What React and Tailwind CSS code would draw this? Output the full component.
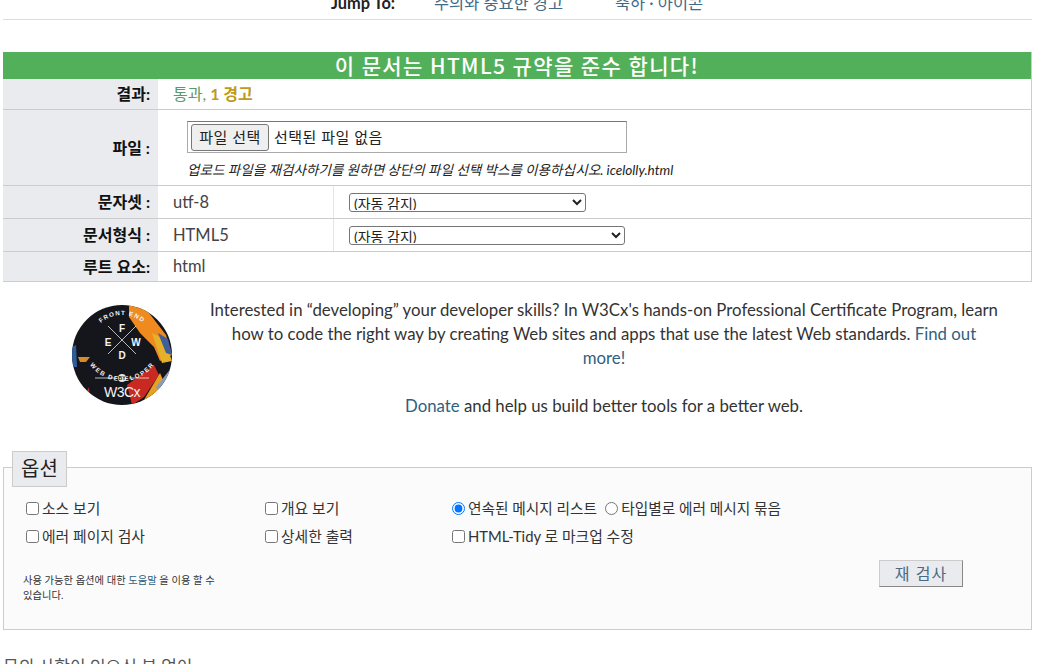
const sans = "font-['Lato','Noto_Sans_CJK_KR',sans-serif]";

function Logo() {
  return (
    <svg width="100" height="100" viewBox="0 0 100 100" className="shrink-0">
      <defs>
        <clipPath id="c"><circle cx="50" cy="50" r="50" /></clipPath>
        <path id="top" d="M18 42 A32 32 0 0 1 82 42" />
        <path id="bot" d="M15 36 A35 35 0 0 0 85 36" />
      </defs>
      <g clipPath="url(#c)">
        <rect width="100" height="100" fill="#14161c" />
        <path d="M57 0 L74 4 L94 30 L100 50 L88 56 L82 42 L68 28 L57 12Z" fill="#ee8a1e" />
        <path d="M80 28 L92 34 L100 56 L90 58Z" fill="#e5b02a" />
        <path d="M86 28 L96 34 L100 50 L94 48Z" fill="#3f5f96" />
        <path d="M55 80 L82 60 L87 70 L72 92 L60 100Z" fill="#c82a22" />
        <path d="M69 100 L88 68 L91 75 L78 100Z" fill="#e8a020" />
        <path d="M84 82 L100 62 L100 66 L86 86Z" fill="#8a9ab8" />
        <path d="M0 42 L4 40 L5 62 L0 62Z" fill="#2f5d9a" />
        <path d="M6 52 L18 52 L14 57 L8 57Z" fill="#d8892a" />
        <path d="M13 90 L17 82 L18 96Z" fill="#b5342a" />
        <g stroke="#e6e6e6" strokeWidth="0.8" fill="none">
          <line x1="36" y1="21" x2="64" y2="49" />
          <line x1="64" y1="21" x2="36" y2="49" />
          <line x1="23" y1="73" x2="43" y2="73" />
          <line x1="57" y1="73" x2="77" y2="73" />
        </g>
        <circle cx="50" cy="73" r="4" fill="#e6e6e6" />
        <g fill="#f4f4f4" fontFamily="Liberation Sans, sans-serif" fontWeight="700" textAnchor="middle">
          <text x="50" y="27" fontSize="10">F</text>
          <text x="36" y="41" fontSize="10">E</text>
          <text x="64" y="41" fontSize="10">W</text>
          <text x="50" y="54" fontSize="10">D</text>
          <text fontSize="6.2" letterSpacing="1.1"><textPath href="#top" startOffset="50%">FRONT END</textPath></text>
          <text fontSize="6.2" letterSpacing="0.9" dominantBaseline="hanging"><textPath href="#bot" startOffset="50%">WEB DEVELOPER</textPath></text>
          <text x="50" y="75" fontSize="5" fill="#14161c">BY</text>
          <text x="50" y="92" fontSize="14" fontWeight="400" letterSpacing="-0.5">W3Cx</text>
        </g>
      </g>
    </svg>
  );
}

function Row({ label, height, children }) {
  return (
    <div className="flex border-b border-[#cccccc]">
      <div className={`w-[155px] shrink-0 bg-[#e9ebef] flex items-center justify-end pr-[8px] font-bold text-[16px] text-[#111] ${height}`}>{label}</div>
      {children}
    </div>
  );
}

function Check({ children }) {
  return (
    <label className="flex items-center text-[14.8px] text-[#333] leading-[20px]">
      <input type="checkbox" className="w-[13px] h-[13px] m-0 mr-[3px] ml-[3px]" />
      {children}
    </label>
  );
}

export default function App() {
  return (
    <div className={`h-[664px] w-[1040px] overflow-hidden bg-white ${sans} text-[#444]`}>
      <div className="ml-[3px] w-[1029px] h-[20px] border-b border-[#dddddd] flex items-end pb-[4px] pl-[328px] text-[16.4px] leading-[24px] overflow-hidden">
        <span className="font-bold text-[#222] w-[103px] shrink-0">Jump To:</span>
        <span className="text-[#3f6a88] w-[181px] shrink-0">주의와 중요한 경고</span>
        <span className="text-[#3f6a88] shrink-0">축하 · 아이콘</span>
      </div>

      <div className="ml-[3px] mr-[8px] mt-[32px] border-r border-[#cccccc]">
        <div className="h-[27px] bg-[#52b05a] text-white text-[21px] leading-[27px] text-center font-['Noto_Sans_CJK_KR',sans-serif] font-medium tracking-[1.4px]">
          이 문서는 HTML5 규약을 준수 합니다!
        </div>
        <Row label="결과:" height="h-[30px]">
          <div className="flex items-center pl-[15px] text-[16px] text-[#5a9a6a]">
            통과,&nbsp;<b className="text-[#c09a1c]">1 경고</b>
          </div>
        </Row>
        <Row label="파일 :" height="h-[75px]">
          <div className="pl-[29px] pt-[11px]">
            <div className="w-[440px] h-[32px] border border-[#aaaaaa] border-t-[#777777] flex items-center pl-[3px] text-[15px] text-[#222]">
              <button className="h-[27px] w-[78px] shrink-0 border border-[#777777] rounded-[3px] bg-[#efefef] text-[15px] tracking-[0.5px] mr-[5px]">파일 선택</button>
              <span className="tracking-[0.5px]">선택된 파일 없음</span>
            </div>
            <p className="italic text-[13.6px] leading-[18px] mt-[8px] text-[#222]">업로드 파일을 재검사하기를 원하면 상단의 파일 선택 박스를 이용하십시오. icelolly.html</p>
          </div>
        </Row>
        <Row label="문자셋 :" height="h-[32px]">
          <div className="w-[176px] border-r border-[#e5e5e5] flex items-center pl-[15px] text-[16.5px]">utf-8</div>
          <div className="flex items-center pl-[15px]">
            <select className="w-[237px] h-[19px] pb-[1px] border border-[#767676] rounded-[3px] text-[14px] text-[#222] bg-white">
              <option>(자동 감지)</option>
            </select>
          </div>
        </Row>
        <Row label="문서형식 :" height="h-[32px]">
          <div className="w-[176px] border-r border-[#e5e5e5] flex items-center pl-[15px] text-[16.5px]">HTML5</div>
          <div className="flex items-center pl-[15px]">
            <select className="w-[276px] h-[19px] pb-[1px] border border-[#767676] rounded-[3px] text-[14px] text-[#222] bg-white">
              <option>(자동 감지)</option>
            </select>
          </div>
        </Row>
        <Row label="루트 요소:" height="h-[29px]">
          <div className="flex items-center pl-[15px] text-[16.5px]">html</div>
        </Row>
      </div>

      <div className="flex mt-[23px] pl-[72px]">
        <Logo />
        <div className="w-[790px] ml-[37px] -mt-[7px] text-center text-[16.8px] leading-[24px] text-[#333]">
          <p>Interested in “developing” your developer skills? In W3Cx's hands-on Professional Certificate Program, learn how to code the right way by creating Web sites and apps that use the latest Web standards. <span className="text-[#2f5f7f]">Find out more!</span></p>
          <p className="mt-[24px]"><span className="text-[#2f5f7f]">Donate</span> and help us build better tools for a better web.</p>
        </div>
      </div>

      <fieldset className="relative ml-[3px] w-[1029px] h-[163px] mt-[49px] border border-[#cccccc] bg-[#fbfbfc]">
        <div className="absolute left-[8px] -top-[17px] w-[55px] h-[36px] bg-[#e9ebef] border border-[#cccccc] text-[#222] text-[20px] leading-[32px] text-center">옵션</div>
        <div className="grid grid-cols-[239px_187px_1fr] pl-[19px] pt-[30px] gap-y-[8px]">
          <Check>소스 보기</Check>
          <Check>개요 보기</Check>
          <div className="flex items-center text-[14.7px] text-[#333] leading-[20px]">
            <input type="radio" name="g" defaultChecked className="w-[13px] h-[13px] m-0 mr-[3px] ml-[3px]" />연속된 메시지 리스트
            <input type="radio" name="g" className="w-[13px] h-[13px] m-0 mr-[3px] ml-[8px]" />타입별로 에러 메시지 묶음
          </div>
          <Check>에러 페이지 검사</Check>
          <Check>상세한 출력</Check>
          <Check>HTML-Tidy 로 마크업 수정</Check>
        </div>
        <div className="flex justify-between pl-[19px] pr-[68px] mt-[14px]">
          <p className="w-[200px] mt-[13px] text-[10.3px] leading-[15px] text-[#333] break-keep">사용 가능한 옵션에 대한 <span className="text-[#2f5f7f]">도움말</span> 을 이용 할 수 있습니다.</p>
          <button className="w-[84px] h-[27px] bg-[#e9ebef] border border-[#cccccc] border-b-[#888888] border-r-[#888888] text-[#4a6a85] text-[16px] tracking-[1px]">재 검사</button>
        </div>
      </fieldset>

      <p className="ml-[3px] mt-[26px] text-[17px] leading-[22px] text-[#555]">문의 사항이 있으신 분 없이</p>
    </div>
  );
}
